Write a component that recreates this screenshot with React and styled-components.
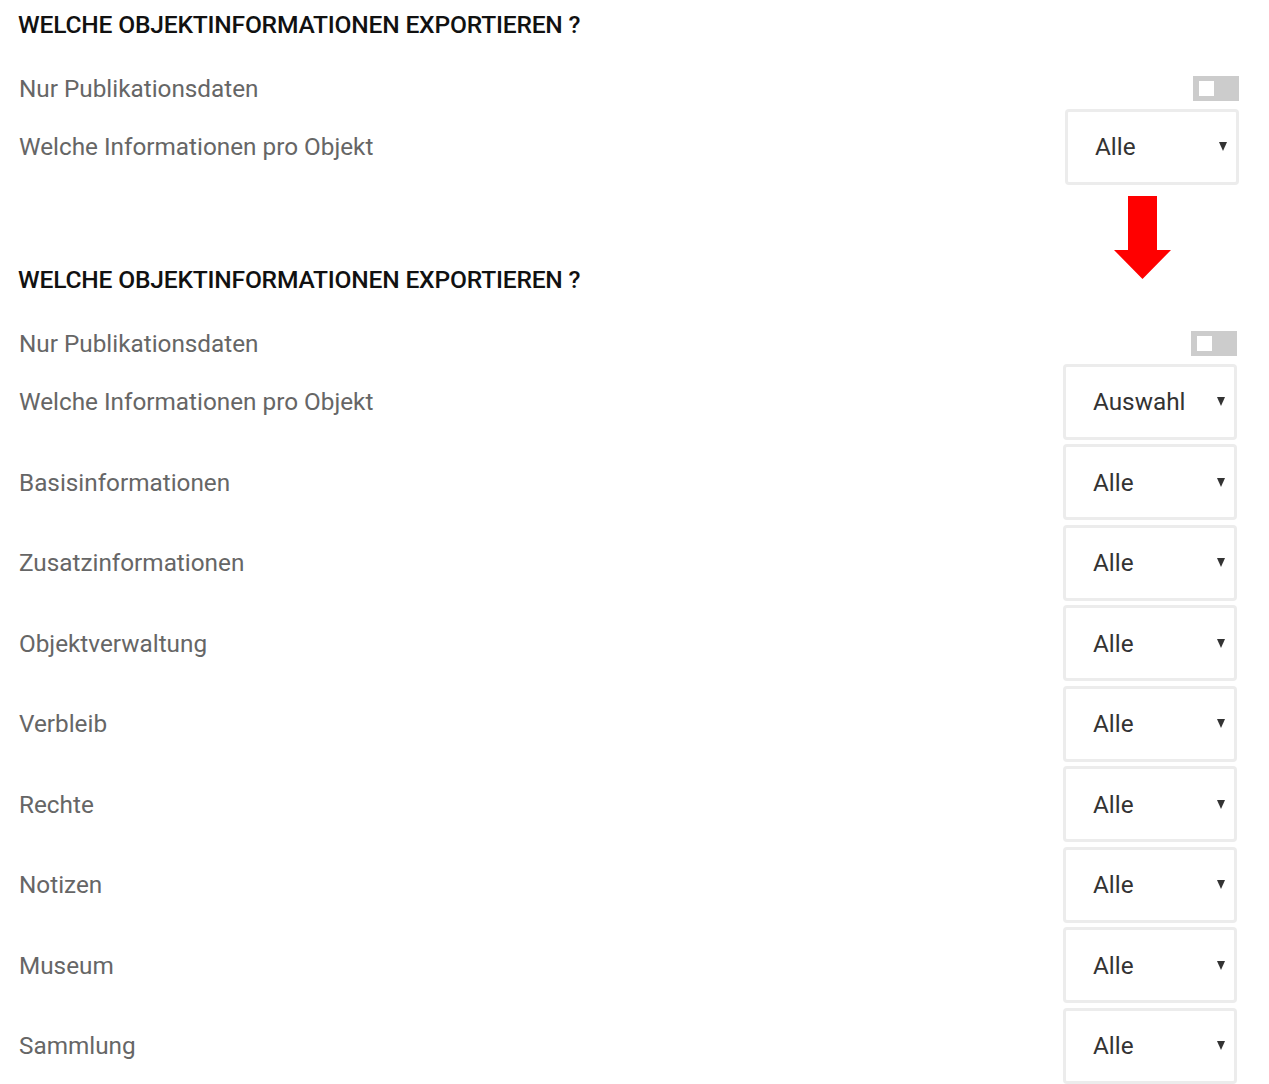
import React from 'react';
import styled, { createGlobalStyle } from 'styled-components';

const GlobalStyle = createGlobalStyle`
  body {
    margin: 0;
    background: #fff;
    font-family: Roboto, "Liberation Sans", sans-serif;
  }
`;

const Page = styled.div`
  padding: 10px 30px 0 18px;
`;

const Section = styled.section`
  margin-right: ${(p) => (p.$inset ? '2px' : '0')};
`;

const Heading = styled.h2`
  margin: 0 0 29.5px;
  font-size: 24.6px;
  line-height: 30px;
  font-weight: 500;
  color: #111;
  letter-spacing: -0.2px;
`;

const Row = styled.div`
  display: flex;
  align-items: center;
  justify-content: space-between;
  height: ${(p) => (p.$compact ? '37px' : '80.5px')};
`;

const Label = styled.span`
  font-size: 24.3px;
  color: #666;
  padding-left: 1px;
`;

const Toggle = styled.div`
  width: 46px;
  height: 25px;
  background: #cccccc;
  display: flex;
  align-items: center;
  padding-left: 6px;
  box-sizing: border-box;
`;

const Knob = styled.span`
  width: 15px;
  height: 15px;
  background: #fff;
`;

const SelectBox = styled.div`
  width: 174px;
  height: 76px;
  box-sizing: border-box;
  border: 3px solid #ececec;
  border-radius: 4px;
  display: flex;
  align-items: center;
  justify-content: space-between;
  padding: 0 9px 0 27px;
  font-size: 24.3px;
  color: #333;
`;

const Caret = styled.span`
  width: 0;
  height: 0;
  border-left: 4.5px solid transparent;
  border-right: 4.5px solid transparent;
  border-top: 9px solid #333;
`;

const Spacer = styled.div`
  position: relative;
  height: 78px;
`;

const ArrowMark = styled.svg`
  position: absolute;
  top: 9px;
  right: 68px;
`;

const Select = ({ value }) => (
  <SelectBox>
    {value}
    <Caret />
  </SelectBox>
);

const Field = ({ label, value }) => (
  <Row>
    <Label>{label}</Label>
    <Select value={value} />
  </Row>
);

const SwitchRow = () => (
  <Row $compact>
    <Label>Nur Publikationsdaten</Label>
    <Toggle>
      <Knob />
    </Toggle>
  </Row>
);

const details = [
  'Basisinformationen',
  'Zusatzinformationen',
  'Objektverwaltung',
  'Verbleib',
  'Rechte',
  'Notizen',
  'Museum',
  'Sammlung',
];

const App = () => (
  <>
    <GlobalStyle />
    <Page>
      <Section>
        <Heading>WELCHE OBJEKTINFORMATIONEN EXPORTIEREN ?</Heading>
        <SwitchRow />
        <Field label="Welche Informationen pro Objekt" value="Alle" />
      </Section>
      <Spacer>
        <ArrowMark width="57" height="83" viewBox="0 0 57 83">
          <polygon points="14,0 43,0 43,54 57,54 28.5,83 0,54 14,54" fill="#ff0000" />
        </ArrowMark>
      </Spacer>
      <Section $inset>
        <Heading>WELCHE OBJEKTINFORMATIONEN EXPORTIEREN ?</Heading>
        <SwitchRow />
        <Field label="Welche Informationen pro Objekt" value="Auswahl" />
        {details.map((d) => (
          <Field key={d} label={d} value="Alle" />
        ))}
      </Section>
    </Page>
  </>
);

export default App;
